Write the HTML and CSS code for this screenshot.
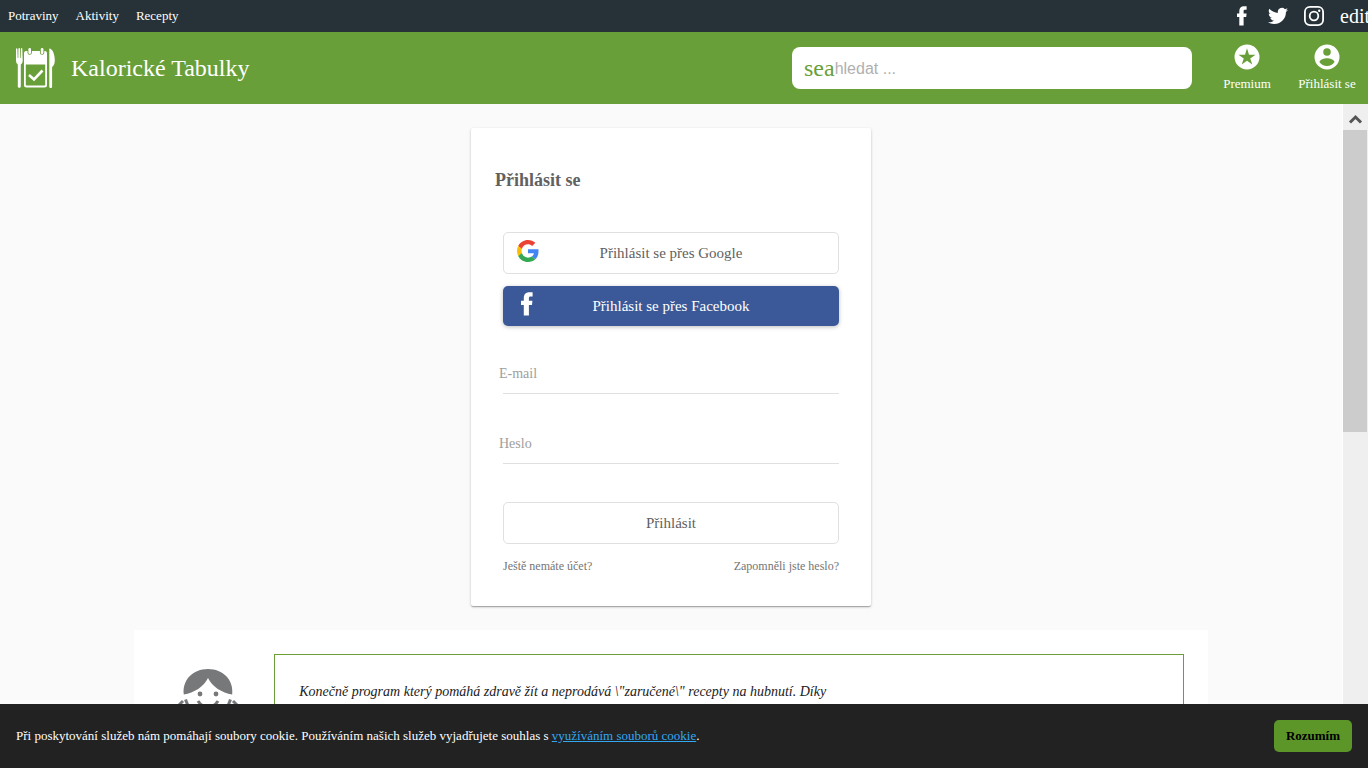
FILE: index.html
```html
<!DOCTYPE html>
<html lang="cs">
<head>
<meta charset="utf-8">
<meta name="viewport" content="width=device-width, initial-scale=1">
<title>Kalorické Tabulky</title>
<link rel="stylesheet" href="styles.css">
</head>
<body>
<nav class="topbar">
  <div class="topbar-links">
    <a href="#">Potraviny</a>
    <a href="#">Aktivity</a>
    <a href="#">Recepty</a>
  </div>
  <div class="social">
    <a href="#" aria-label="Facebook"><svg width="20" height="20" viewBox="0 0 20 20"><path fill="#fff" d="M7.300 19.500V11H5V7.500h2.300V5.200C7.300 2 9 .3 12 .3h2.600v3.500h-1.500c-1.200 0-1.500.5-1.500 1.500v2.200h3l-.4 3.500h-2.600v8.500z"/></svg></a>
    <a href="#" aria-label="Twitter"><svg width="20" height="20" viewBox="0 0 24 24"><path fill="#fff" d="M24 4.600a10 10 0 0 1-2.800.8 5 5 0 0 0 2.200-2.700 10 10 0 0 1-3.100 1.200 4.900 4.900 0 0 0-8.400 4.500A14 14 0 0 1 1.700 3.200a4.900 4.900 0 0 0 1.500 6.500 5 5 0 0 1-2.200-.6 4.900 4.900 0 0 0 3.900 4.900 5 5 0 0 1-2.200.1 4.900 4.900 0 0 0 4.600 3.400A10 10 0 0 1 0 19.500a14 14 0 0 0 7.500 2.200c9.100 0 14.400-7.700 14-14.600A10 10 0 0 0 24 4.600z"/></svg></a>
    <a href="#" aria-label="Instagram"><svg width="20" height="20" viewBox="0 0 20 20" fill="none" stroke="#fff" stroke-width="1.800"><rect x=".9" y=".9" width="18.200" height="18.200" rx="5"/><circle cx="10" cy="10" r="4.300"/><circle cx="15.200" cy="4.800" r="1.200" fill="#fff" stroke="none"/></svg></a>
    <a class="ligature" href="#">edit</a>
  </div>
</nav>
<header class="header">
  <a class="brand" href="#">
    <svg width="40" height="40" viewBox="0 0 40 40" aria-hidden="true">
      <g fill="#fff"><path d="M0 1c0-1 1.300-1 1.400 0l.3 9h.6L2.400.8c0-1 1.600-1 1.600 0V10h.6l.3-9.200c0-1 1.300-1 1.400 0L6.700 12.500c0 2-.7 3.200-1.900 4v22c0 1.700-3 1.700-3 0v-22C.7 15.700 0 14.500 0 12.500z"/>
      <path d="M33.300.5c3 0 5.500 5.500 5.500 11.500 0 3-.6 5.500-2.700 7v19.500c0 2-2.800 2-2.800 0z"/>
      <path fill-rule="evenodd" d="M10.500 3h1v1.500a2.200 2.200 0 0 0 4.400 0V3h8v1.500a2.200 2.200 0 0 0 4.400 0V3h1A2.200 2.200 0 0 1 31 5v32a2.500 2.500 0 0 1-2.500 2.500h-18A2.500 2.500 0 0 1 8 37V5a2.200 2.200 0 0 1 2.500-2zM9.800 16.500v20c0 .7.400 1 1 1h17.400c.7 0 1-.3 1-1v-20z"/>
      <rect x="12.400" width="2.600" height="6" rx="1.300"/><rect x="24.800" width="2.600" height="6" rx="1.300"/></g>
      <path d="M13 27l5 4.500 8.500-9" fill="none" stroke="#fff" stroke-width="2.600"/>
    </svg>
    <span>Kalorické Tabulky</span>
  </a>
  <div class="header-right">
    <label class="search">
      <span class="search-icon" aria-hidden="true">sea</span>
      <input type="search" placeholder="hledat ..." aria-label="hledat">
    </label>
    <a class="action" href="#">
      <svg width="30" height="30" viewBox="0 0 24 24" aria-hidden="true"><path fill="#fff" d="M12 2a10 10 0 1 0 0 20 10 10 0 0 0 0-20zm4.200 16L12 14.900 7.800 18l1.600-4.800-4.200-3h5.200L12 5l1.600 5.200h5.200l-4.200 3z"/></svg>
      <span>Premium</span>
    </a>
    <a class="action" href="#">
      <svg width="30" height="30" viewBox="0 0 24 24" aria-hidden="true"><path fill="#fff" d="M12 2a10 10 0 1 0 0 20 10 10 0 0 0 0-20zm0 3a3 3 0 1 1 0 6 3 3 0 0 1 0-6zm0 14.200c-2.500 0-4.700-1.300-6-3.200 0-2 4-3.100 6-3.100s6 1.100 6 3.100a7.200 7.200 0 0 1-6 3.200z"/></svg>
      <span>Přihlásit se</span>
    </a>
  </div>
</header>
<div class="viewport">
  <main class="content">
    <form class="card">
      <h1>Přihlásit se</h1>
      <div class="card-body">
        <button class="btn" type="button">
          <svg class="btn-icon" width="22" height="22" viewBox="0 0 48 48" aria-hidden="true"><path fill="#EA4335" d="M24 9.500c3.540 0 6.710 1.220 9.210 3.600l6.850-6.850C35.900 2.380 30.470 0 24 0 14.620 0 6.510 5.380 2.560 13.220l7.980 6.190C12.430 13.720 17.740 9.500 24 9.500z"/><path fill="#4285F4" d="M46.980 24.550c0-1.570-.15-3.090-.38-4.550H24v9.020h12.940c-.58 2.960-2.260 5.480-4.780 7.180l7.730 6c4.510-4.180 7.090-10.360 7.090-17.650z"/><path fill="#FBBC05" d="M10.530 28.590c-.48-1.450-.76-2.990-.76-4.590s.27-3.140.76-4.590l-7.980-6.190C.92 16.460 0 20.120 0 24c0 3.880.92 7.540 2.560 10.780z"/><path fill="#34A853" d="M24 48c6.480 0 11.930-2.130 15.890-5.810l-7.730-6c-2.150 1.450-4.920 2.300-8.160 2.300-6.260 0-11.570-4.220-13.470-9.910l-7.980 6.190C6.510 42.620 14.620 48 24 48z"/></svg>
          Přihlásit se přes Google
        </button>
        <button class="btn btn-facebook" type="button">
          <svg class="btn-icon" width="22" height="24" viewBox="0 0 22 24" aria-hidden="true"><path fill="#fff" d="M7.800 23.500V13H5V8.800h2.800V6.200c0-4 2-6 5.600-6h3.200v4.200h-2c-1.200 0-1.700.6-1.700 1.700v2.700h3.500l-.4 4.200h-3.100v10.500z"/></svg>
          Přihlásit se přes Facebook
        </button>
        <div class="field">
          <label for="email">E-mail</label>
          <input id="email" type="email">
        </div>
        <div class="field">
          <label for="password">Heslo</label>
          <input id="password" type="password">
        </div>
        <button class="btn btn-submit" type="submit">Přihlásit</button>
        <div class="card-links">
          <a href="#">Ještě nemáte účet?</a>
          <a href="#">Zapomněli jste heslo?</a>
        </div>
      </div>
    </form>
    <section class="testimonial">
      <svg class="avatar" width="64" height="64" viewBox="0 0 64 64" aria-hidden="true">
        <g fill="#77787a"><path d="M7.800 26.500C6 12 17 1 32 1s26 11 24.200 25.500C46 25 36 18.500 32 10 28 18.500 18 25 7.800 26.500z"/><circle cx="24" cy="26" r="2.400"/><circle cx="40" cy="26" r="2.400"/></g>
        <g fill="none" stroke="#77787a" stroke-width="3"><path d="M22 33c5 8 15 8 20 0M9.500 31.500l4 10M54.500 31.500l-4 10M3 37l4-4M61 37l-4-4"/></g>
      </svg>
      <blockquote>Konečně program který pomáhá zdravě žít a neprodává \"zaručené\" recepty na hubnutí. Díky</blockquote>
    </section>
  </main>
  <div class="scrollbar" aria-hidden="true">
    <svg width="24" height="26" viewBox="0 0 24 26"><path d="M7 18.500l5.500-5.500 5.500 5.500" fill="none" stroke="#555" stroke-width="3"/></svg>
    <div class="thumb"></div>
  </div>
</div>
<aside class="cookies">
  <p>Při poskytování služeb nám pomáhají soubory cookie. Používáním našich služeb vyjadřujete souhlas s <a href="#">využíváním souborů cookie</a>.</p>
  <button type="button">Rozumím</button>
</aside>
</body>
</html>
```
FILE: styles.css
```css
* { box-sizing: border-box; }
body {
  margin: 0;
  height: 100vh;
  display: flex;
  flex-direction: column;
  overflow: hidden;
  background: #fafafa;
  color: #212121;
  font-family: "Liberation Serif", "Times New Roman", serif;
  font-size: 13px;
}
a { color: inherit; text-decoration: none; }
button, input { font: inherit; }
svg { display: block; flex: none; }

.topbar {
  flex: none;
  height: 32px;
  display: flex;
  justify-content: space-between;
  align-items: center;
  background: #263238;
  color: #fff;
}
.topbar-links { display: flex; gap: 17px; padding-left: 8px; }
.social { display: flex; align-items: center; gap: 16px; }
.ligature { width: 28px; overflow: hidden; font-size: 20px; line-height: 24px; }

.header {
  flex: none;
  height: 72px;
  display: flex;
  justify-content: space-between;
  align-items: center;
  background: #689f38;
  color: #fff;
}
.brand { display: flex; align-items: center; gap: 15px; padding-left: 16px; font-size: 24px; }
.header-right { display: flex; align-items: center; }
.search {
  width: 400px;
  height: 42px;
  margin-right: 15px;
  padding-left: 12px;
  display: flex;
  align-items: center;
  background: #fff;
  border-radius: 8px;
}
.search-icon { color: #689f38; font-size: 24px; }
.search input {
  flex: 1;
  min-width: 0;
  padding: 2px 0 0;
  border: 0;
  outline: 0;
  background: none;
  font-family: "Liberation Sans", Arial, sans-serif;
  font-size: 16px;
}
.search input::placeholder { color: #b0b0b0; }
.action {
  width: 80px;
  padding-bottom: 3px;
  display: flex;
  flex-direction: column;
  align-items: center;
  gap: 4px;
  line-height: 15px;
}
.action:last-child { margin-right: 1px; }

.viewport { flex: 1; min-height: 0; display: flex; }
.content {
  flex: 1;
  overflow: hidden;
  display: flex;
  flex-direction: column;
  align-items: center;
  gap: 24px;
  padding-top: 24px;
  border-right: 1px solid #fff;
}
.card {
  flex: none;
  width: 400px;
  padding: 40px 24px 32px;
  background: #fff;
  border-radius: 2px;
  box-shadow: 0 1px 3px rgba(0, 0, 0, .2), 0 1px 1px rgba(0, 0, 0, .14), 0 2px 1px -1px rgba(0, 0, 0, .12);
  color: #616161;
}
.card h1 { margin: 0 0 40px; font-size: 18px; line-height: 24px; }
.card-body { display: flex; flex-direction: column; padding: 0 8px; }
.btn {
  position: relative;
  height: 42px;
  margin-bottom: 12px;
  padding: 0;
  border: 1px solid #e0e0e0;
  border-radius: 5px;
  background: #fff;
  color: #616161;
  font-size: 15px;
}
.btn-icon { position: absolute; left: 13px; top: 7px; }
.btn-facebook {
  height: 40px;
  border: 0;
  background: #3b5998;
  color: #fff;
  box-shadow: 0 1px 4px rgba(0, 0, 0, .26);
}
.btn-facebook .btn-icon { top: 6px; }
.field {
  display: grid;
  height: 40px;
  margin: 16px 0 14px;
  font-size: 14px;
}
.field label,
.field input { grid-area: 1 / 1; }
.field label {
  align-self: center;
  margin-left: -4px;
  line-height: 18px;
  color: #9e9e9e;
}
.field input {
  width: 100%;
  padding: 0;
  border: 0;
  border-bottom: 1px solid #e0e0e0;
  outline: 0;
  background: none;
}
.btn-submit { margin: 24px 0 14px; }
.card-links { display: flex; justify-content: space-between; font-size: 12px; line-height: 16px; color: #757575; }

.testimonial {
  flex: none;
  width: 80%;
  display: flex;
  align-items: flex-start;
  gap: 34px;
  padding: 24px 24px 24px 42px;
  background: #fff;
}
.avatar { margin-top: 14px; }
.testimonial blockquote {
  flex: 1;
  margin: 0;
  padding: 28px 24px;
  border: 1px solid #689f38;
  font-size: 14px;
  line-height: 18px;
  font-style: italic;
}

.scrollbar { width: 25px; padding-right: 1px; background: #efefef; }
.thumb { height: 302px; background: #ccc; }

.cookies {
  position: fixed;
  left: 0;
  right: 0;
  bottom: 0;
  display: flex;
  justify-content: space-between;
  align-items: center;
  padding: 16px;
  background: #222;
  color: #fff;
}
.cookies p { margin: 0; }
.cookies a { color: #31a8f0; text-decoration: underline; }
.cookies button {
  width: 78px;
  height: 32px;
  padding: 0;
  border: 0;
  border-radius: 5px;
  background: #5c9629;
  color: #000;
  font-weight: bold;
}
```
